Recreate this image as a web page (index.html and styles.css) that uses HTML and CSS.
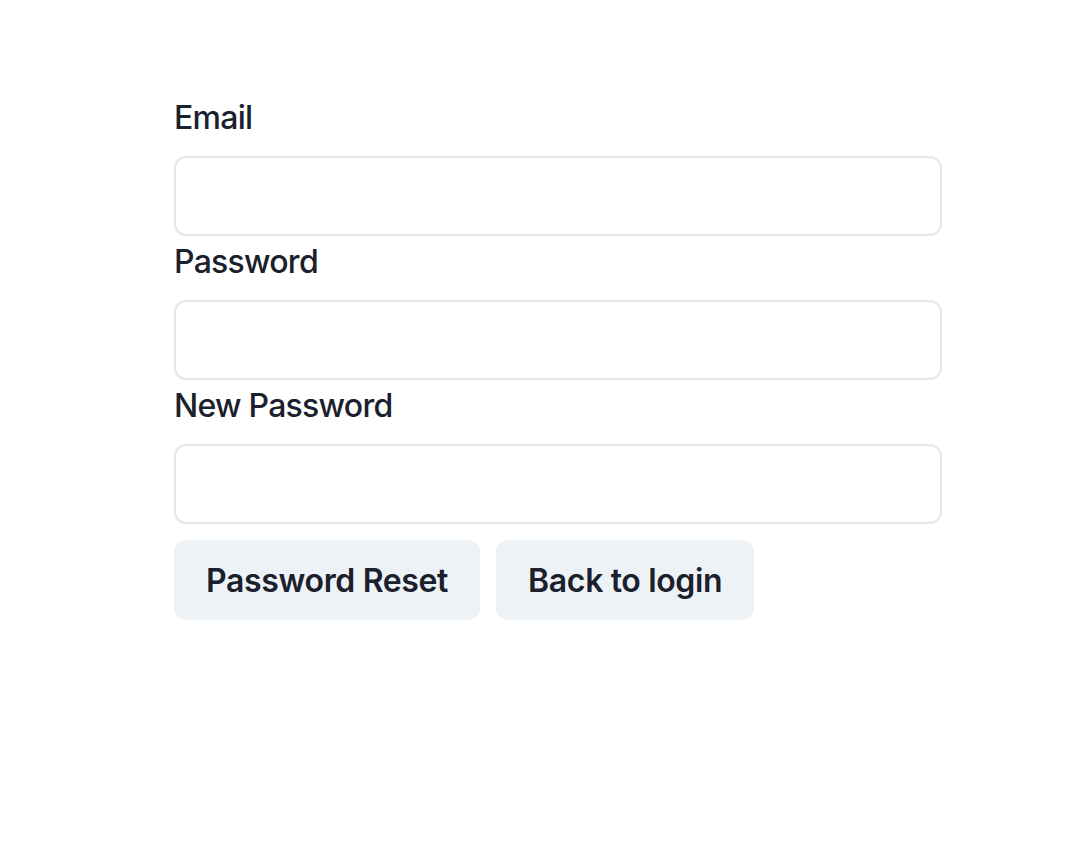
FILE: index.html
```html
<!DOCTYPE html>
<html>
<head>
  <meta charset="UTF-8">
  <title>Password Reset</title>
  <link rel="stylesheet" href="styles.css">
</head>
<body>
  <div class="container">
    <form class="reset-form">
      <label for="email">Email</label>
      <input type="email" id="email" name="email">

      <label for="password">Password</label>
      <input type="password" id="password" name="password">

      <label for="new_password">New Password</label>
      <input type="password" id="new_password" name="new_password">

      <div class="actions">
        <button type="submit">Password Reset</button>
        <button type="button">Back to login</button>
      </div>
    </form>
  </div>
</body>
</html>
```

FILE: styles.css
```css
body {
  margin: 0;
  font-family: Inter, "Noto Sans", sans-serif;
  color: #1a202c;
  background: #fff;
}
.container {
  padding: 92px 0 0 174px;
}
.reset-form {
  width: 768px;
  display: flex;
  flex-direction: column;
}
label {
  display: block;
  font-size: 32px;
  font-weight: 500;
  line-height: 48px;
  letter-spacing: -0.75px;
  padding-top: 2px;
  margin-bottom: 14px;
}
input {
  box-sizing: border-box;
  width: 100%;
  height: 80px;
  padding: 0 32px;
  font-size: 32px;
  font-family: inherit;
  border: 2px solid #e2e8f0;
  border-radius: 12px;
  outline: none;
  margin: 0;
}
.actions {
  display: flex;
  gap: 16px;
  margin-top: 16px;
}
button {
  height: 80px;
  padding: 0 32px;
  font-family: inherit;
  font-size: 32px;
  font-weight: 600;
  letter-spacing: -0.35px;
  color: #1a202c;
  background: #edf2f7;
  border: none;
  border-radius: 12px;
}
```
